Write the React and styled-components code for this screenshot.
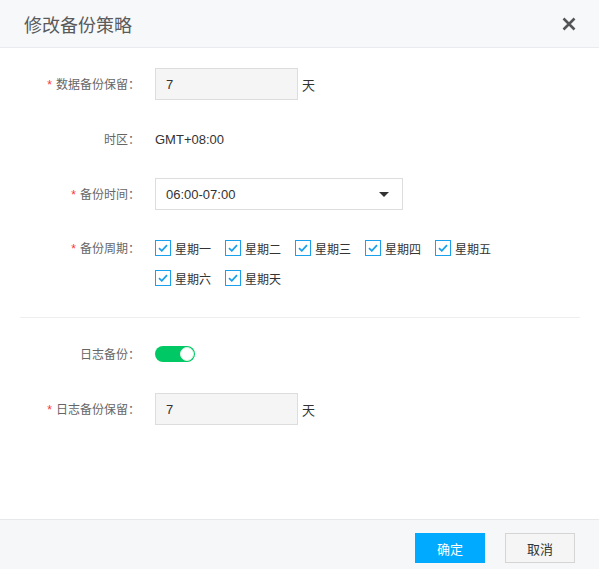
import styled, { createGlobalStyle } from "styled-components";

const GlobalStyle = createGlobalStyle`
  html, body {
    margin: 0;
    padding: 0;
    background: #fff;
  }
  body {
    font-family: "Liberation Sans", "Noto Sans CJK SC", sans-serif;
    font-size: 12px;
    color: #333;
  }
`;

const Dialog = styled.div`
  width: 599px;
  height: 569px;
  display: flex;
  flex-direction: column;
  background: #fff;
`;

const Header = styled.div`
  height: 47px;
  flex: none;
  display: flex;
  align-items: center;
  justify-content: space-between;
  padding: 0 24px;
  background: #f7f8fa;
  border-bottom: 1px solid #e9ebee;
`;

const Title = styled.h2`
  margin: 0;
  font-size: 18px;
  font-weight: normal;
  color: #5a5a5a;
  font-family: "Noto Sans CJK SC", sans-serif;
`;

const Close = styled.button`
  width: 16px;
  height: 16px;
  padding: 0;
  margin-right: -2px;
  border: none;
  background: none;
  display: flex;
  align-items: center;
  justify-content: center;
  cursor: pointer;
`;

const Body = styled.div`
  flex: 1;
  padding: 20px 19px 0 20px;
`;

const Row = styled.div`
  display: flex;
  align-items: ${(p) => (p.$top ? "flex-start" : "center")};
  min-height: 32px;
  margin-bottom: ${(p) => p.$gap ?? 23}px;
`;

const Label = styled.div`
  width: 120px;
  margin-right: 15px;
  flex: none;
  text-align: right;
  color: #666;
  font-family: "Noto Sans CJK SC", sans-serif;
  line-height: 30px;
`;

const Star = styled.span`
  color: #f33;
  margin-right: 4px;
  font-family: "Liberation Sans", sans-serif;
`;

const Input = styled.input`
  box-sizing: border-box;
  width: 143px;
  height: 32px;
  padding: 0 10px;
  border: 1px solid #ddd;
  background: #f5f5f5;
  font: inherit;
  font-size: 13px;
  color: #333;
  outline: none;
`;

const Unit = styled.span`
  margin-left: 4px;
  font-size: 13px;
  color: #333;
  font-family: "Noto Sans CJK SC", sans-serif;
`;

const Value = styled.span`
  font-size: 13px;
  color: #333;
`;

const Select = styled.div`
  box-sizing: border-box;
  width: 248px;
  height: 32px;
  padding: 0 13px 0 10px;
  border: 1px solid #ddd;
  background: #fff;
  display: flex;
  align-items: center;
  justify-content: space-between;
  font-size: 13px;
  color: #333;
`;

const Caret = styled.span`
  width: 0;
  height: 0;
  border-left: 5px solid transparent;
  border-right: 5px solid transparent;
  border-top: 5px solid #333;
`;

const Days = styled.div`
  width: 400px;
  display: flex;
  flex-wrap: wrap;
`;

const Day = styled.label`
  width: 70px;
  height: 30px;
  display: flex;
  align-items: center;
  font-family: "Noto Sans CJK SC", sans-serif;
  color: #333;
  cursor: pointer;
`;

const Box = styled.span`
  box-sizing: border-box;
  width: 16px;
  height: 16px;
  margin-right: 4px;
  border: 1px solid #1ba1ec;
  background: #fff;
  display: flex;
  align-items: center;
  justify-content: center;
`;

const Divider = styled.div`
  height: 1px;
  background: #eceef0;
  margin: 1px 0 20px;
`;

const Toggle = styled.span`
  position: relative;
  width: 40px;
  height: 16px;
  border-radius: 8px;
  background: #00c864;
`;

const Knob = styled.span`
  position: absolute;
  top: 1px;
  right: 1px;
  box-sizing: border-box;
  width: 14px;
  height: 14px;
  border-radius: 50%;
  background: #fff;
  border: 1px solid #d8f3e4;
`;

const Footer = styled.div`
  height: 50px;
  flex: none;
  box-sizing: border-box;
  padding: 13px 24px 0 0;
  display: flex;
  justify-content: flex-end;
  align-items: flex-start;
  gap: 20px;
  background: #f5f7f8;
  border-top: 1px solid #e6e8ea;
`;

const Button = styled.button`
  box-sizing: border-box;
  width: 70px;
  height: 30px;
  border: 1px solid ${(p) => (p.$primary ? "#00aaff" : "#d5d5d5")};
  background: ${(p) => (p.$primary ? "#00aaff" : "#f5f5f5")};
  color: ${(p) => (p.$primary ? "#fff" : "#333")};
  font-family: "Noto Sans CJK SC", sans-serif;
  font-size: 13px;
  cursor: pointer;
`;

const days = ["星期一", "星期二", "星期三", "星期四", "星期五", "星期六", "星期天"];

const Check = () => (
  <svg width="10" height="8" viewBox="0 0 10 8">
    <path d="M1 4.2 L3.8 6.8 L9 1.2" fill="none" stroke="#1ba1ec" strokeWidth="1.8" />
  </svg>
);

export default function App() {
  return (
    <>
      <GlobalStyle />
      <Dialog>
        <Header>
          <Title>修改备份策略</Title>
          <Close aria-label="关闭">
            <svg width="14" height="14" viewBox="0 0 14 14">
              <path d="M1.5 1.5 L12.5 12.5 M12.5 1.5 L1.5 12.5" stroke="#555" strokeWidth="2.6" />
            </svg>
          </Close>
        </Header>

        <Body>
          <Row>
            <Label><Star>*</Star>数据备份保留：</Label>
            <Input defaultValue="7" />
            <Unit>天</Unit>
          </Row>
          <Row>
            <Label>时区：</Label>
            <Value>GMT+08:00</Value>
          </Row>
          <Row>
            <Label><Star>*</Star>备份时间：</Label>
            <Select>
              06:00-07:00
              <Caret />
            </Select>
          </Row>
          <Row $top $gap={24}>
            <Label><Star>*</Star>备份周期：</Label>
            <Days>
              {days.map((d) => (
                <Day key={d}>
                  <Box><Check /></Box>
                  {d}
                </Day>
              ))}
            </Days>
          </Row>

          <Divider />

          <Row>
            <Label>日志备份：</Label>
            <Toggle><Knob /></Toggle>
          </Row>
          <Row>
            <Label><Star>*</Star>日志备份保留：</Label>
            <Input defaultValue="7" />
            <Unit>天</Unit>
          </Row>
        </Body>

        <Footer>
          <Button $primary>确定</Button>
          <Button>取消</Button>
        </Footer>
      </Dialog>
    </>
  );
}
